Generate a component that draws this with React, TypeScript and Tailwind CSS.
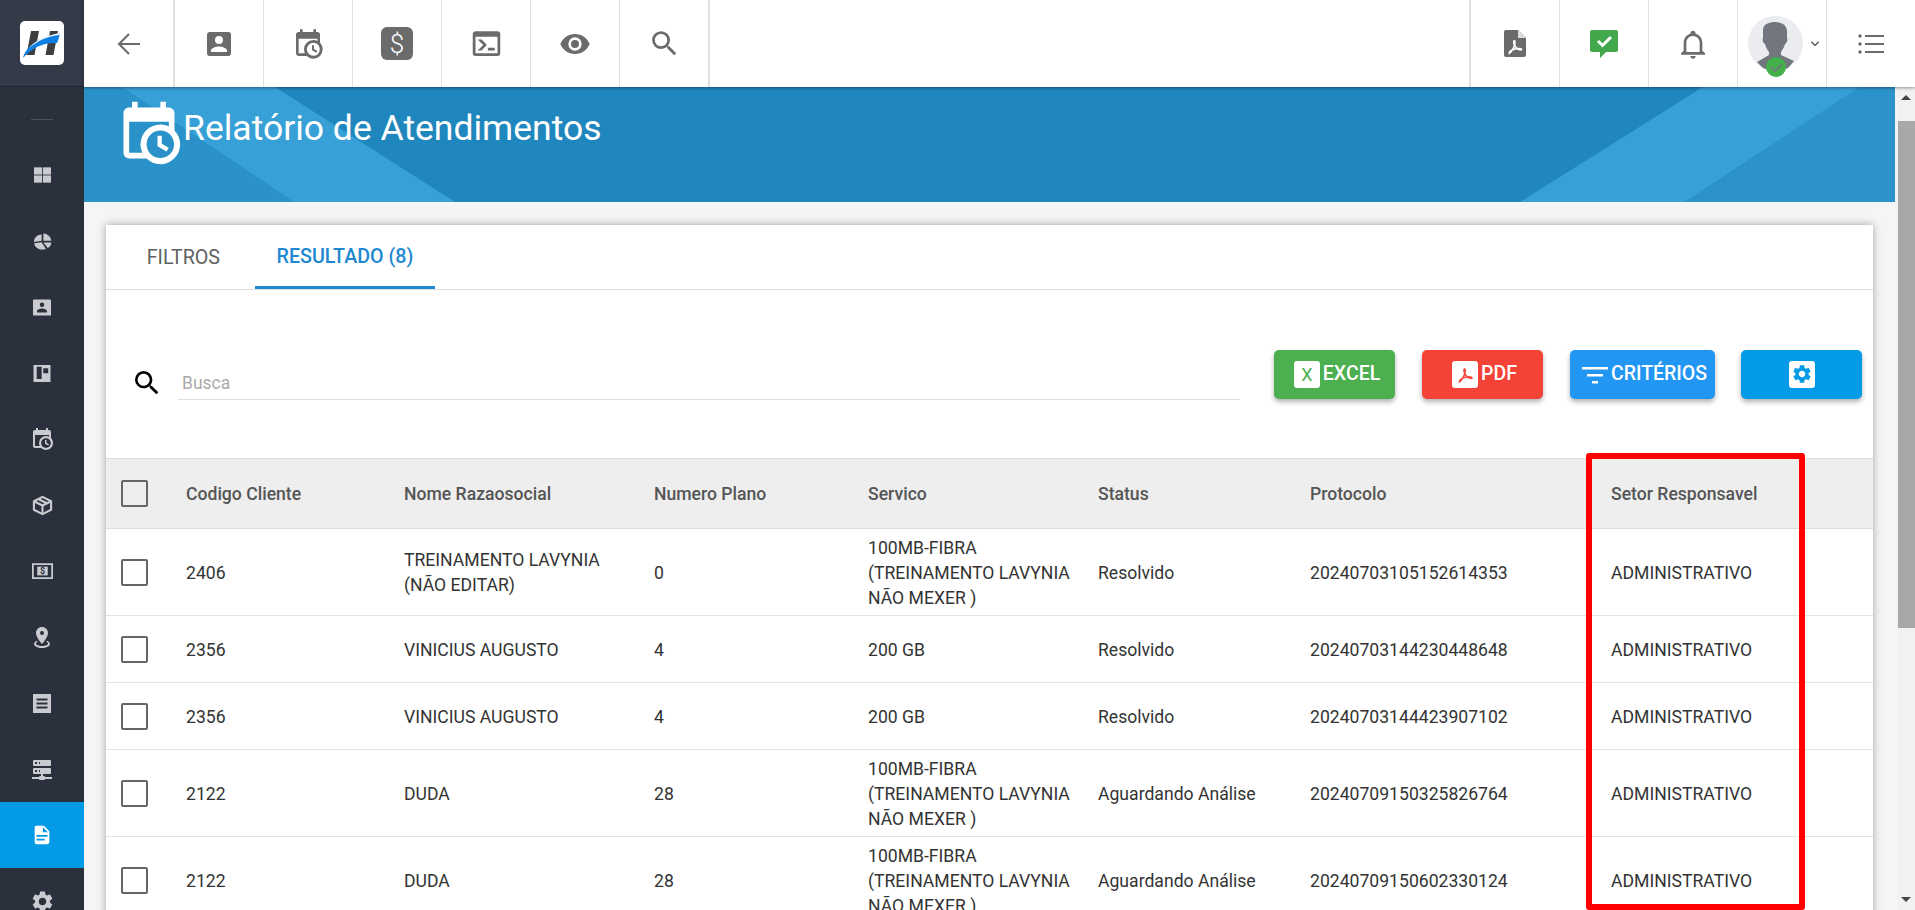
import React from 'react';
import { MdSettings } from 'react-icons/md';

const P = {
  account: 'M6,17C6,15 10,13.9 12,13.9C14,13.9 18,15 18,17V18H6M15,9A3,3 0 0,1 12,12A3,3 0 0,1 9,9A3,3 0 0,1 12,6A3,3 0 0,1 15,9M3,5V19A2,2 0 0,0 5,21H19A2,2 0 0,0 21,19V5A2,2 0 0,0 19,3H5C3.89,3 3,3.9 3,5Z',
  calendarClock: 'M15,13H16.5V15.82L18.94,17.23L18.19,18.53L15,16.69V13M19,8H5V19H9.67C9.24,18.09 9,17.07 9,16A7,7 0 0,1 16,9C17.07,9 18.09,9.24 19,9.67V8M5,21C3.89,21 3,20.1 3,19V5C3,3.89 3.89,3 5,3H6V1H8V3H16V1H18V3H19A2,2 0 0,1 21,5V11.1C22.24,12.36 23,14.09 23,16A7,7 0 0,1 16,23C14.09,23 12.36,22.24 11.1,21H5M16,11.15A4.85,4.85 0 0,0 11.15,16C11.15,18.68 13.32,20.85 16,20.85A4.85,4.85 0 0,0 20.85,16C20.85,13.32 18.68,11.15 16,11.15Z',
  console: 'M20,19V7H4V19H20M20,3A2,2 0 0,1 22,5V19A2,2 0 0,1 20,21H4A2,2 0 0,1 2,19V5C2,3.89 2.9,3 4,3H20M13,17V15H18V17H13M9.58,13L5.57,9H8.4L11.7,12.3C12.09,12.69 12.09,13.33 11.7,13.72L8.42,17H5.59L9.58,13Z',
  eye: 'M12,9A3,3 0 0,0 9,12A3,3 0 0,0 12,15A3,3 0 0,0 15,12A3,3 0 0,0 12,9M12,17A5,5 0 0,1 7,12A5,5 0 0,1 12,7A5,5 0 0,1 17,12A5,5 0 0,1 12,17M12,4.5C7,4.5 2.73,7.61 1,12C2.73,16.39 7,19.5 12,19.5C17,19.5 21.27,16.39 23,12C21.27,7.61 17,4.5 12,4.5Z',
  magnify: 'M9.5,3A6.5,6.5 0 0,1 16,9.5C16,11.11 15.41,12.59 14.44,13.73L14.71,14H15.5L20.5,19L19,20.5L14,15.5V14.71L13.73,14.44C12.59,15.41 11.11,16 9.5,16A6.5,6.5 0 0,1 3,9.5A6.5,6.5 0 0,1 9.5,3M9.5,5C7,5 5,7 5,9.5C5,12 7,14 9.5,14C12,14 14,12 14,9.5C14,7 12,5 9.5,5Z',
  bell: 'M10 21H14C14 22.1 13.1 23 12 23S10 22.1 10 21M21 19V20H3V19L5 17V11C5 7.9 7 5.2 10 4.3V4C10 2.9 10.9 2 12 2S14 2.9 14 4V4.3C17 5.2 19 7.9 19 11V17L21 19M17 11C17 8.2 14.8 6 12 6S7 8.2 7 11V18H17V11Z',
  marker: 'M12,2C15.31,2 18,4.66 18,7.95C18,12.41 12,19 12,19C12,19 6,12.41 6,7.95C6,4.66 8.69,2 12,2M12,6A2,2 0 0,0 10,8A2,2 0 0,0 12,10A2,2 0 0,0 14,8A2,2 0 0,0 12,6M20,19C20,21.21 16.42,23 12,23C7.58,23 4,21.21 4,19C4,17.71 5.22,16.56 7.11,15.83L7.75,16.74C6.67,17.19 6,17.81 6,18.5C6,19.88 8.69,21 12,21C15.31,21 18,19.88 18,18.5C18,17.81 17.33,17.19 16.25,16.74L16.89,15.83C18.78,16.56 20,17.71 20,19Z',
  server: 'M13,19H14A1,1 0 0,1 15,20H22V22H15A1,1 0 0,1 14,23H10A1,1 0 0,1 9,22H2V20H9A1,1 0 0,1 10,19H11V17H4A1,1 0 0,1 3,16V12A1,1 0 0,1 4,11H20A1,1 0 0,1 21,12V16A1,1 0 0,1 20,17H13V19M4,3H20A1,1 0 0,1 21,4V8A1,1 0 0,1 20,9H4A1,1 0 0,1 3,8V4A1,1 0 0,1 4,3M9,7H10V5H9V7M9,15H10V13H9V15M5,5V7H7V5H5M5,13V15H7V13H5Z',
  file: 'M13,9H18.5L13,3.5V9M6,2H14L20,8V20A2,2 0 0,1 18,22H6C4.89,22 4,21.1 4,20V4C4,2.89 4.89,2 6,2M15,18V16H6V18H15M18,14V12H6V14H18Z',
  swoosh: 'M5 20.5c2.5-1.6 4.6-5 6-9 .6-1.8.9-3.6.7-5-.2-1-1.300-1.100-1.500.1-.3 2 1.200 5 3.100 7.100 1.500 1.600 3.500 2.700 5.200 2.800 1.100 0 1.400-1 .300-1.400-2.500-.800-7.300-.100-10.700 1.400-1.700 1-3.200 2.500-3.100 3.500z',
};

const Mdi = ({ d, className }: { d: string; className?: string }) => (
  <svg viewBox="0 0 24 24" className={className} fill="currentColor"><path d={d} /></svg>
);

const TopCell = ({ children, thick, width = 'w-[89px]' }: { children: React.ReactNode; thick?: boolean; width?: string }) => (
  <div className={`flex h-full shrink-0 items-center justify-center border-r border-[#e0e0e0] ${width} ${thick ? 'border-r-2' : ''}`}>
    {children}
  </div>
);

const Logo = () => (
  <svg viewBox="0 0 44 44" className="h-[44px] w-[44px]">
    <rect width="44" height="44" rx="5" fill="#fff" />
    <path d="M11 10h8l-4.500 24h-8z M30 10h8l-4.500 24h-8z" fill="#3f3f42" />
    <path d="M3 37c3-11 13-20 37-25-1 5-2 8-3 10-13-1-24 4-34 15z" fill="#0d7fe0" />
    <path d="M9 27c6-7 15-12 31-15l-.500 2c-12 1-22 6-30.500 13z" fill="#fff" />
  </svg>
);

const SideIcon = ({ children, active }: { children: React.ReactNode; active?: boolean }) => (
  <div className={`flex h-[66px] shrink-0 items-center justify-center ${active ? 'bg-[#039be5] text-white' : 'text-[#c9cbd0]'}`}>
    {children}
  </div>
);

const Sidebar = () => (
  <aside className="flex w-[84px] shrink-0 flex-col overflow-hidden bg-[#2b303d]">
    <div className="flex h-[87px] shrink-0 items-center justify-center border-b border-[#23272f] bg-[#353a48]">
      <Logo />
    </div>
    <div className="mx-auto mt-[32px] mb-[22px] h-px w-[22px] shrink-0 bg-[#4a4f5c]" />
    <SideIcon>
      <svg viewBox="0 0 20 18" className="h-[16px] w-[17px]" fill="currentColor">
        <rect width="9.500" height="8.500" /><rect x="10.500" width="9.500" height="8.500" />
        <rect y="9.500" width="9.500" height="8.500" /><rect x="10.500" y="9.500" width="9.500" height="8.500" />
      </svg>
    </SideIcon>
    <SideIcon>
      <svg viewBox="0 0 24 24" className="h-[21px] w-[21px]" fill="currentColor">
        <path d="M11 4A9 8.500 0 0 0 2 12.500L11 11Z" />
        <path d="M13 3A9 8.500 0 0 1 22 11H13Z" />
        <path d="M2.500 14L11 12.800L16 20.500A9.500 8 0 0 1 2.500 14Z" />
        <path d="M13 13H22A9 8 0 0 1 18 19.500Z" />
      </svg>
    </SideIcon>
    <SideIcon>
      <svg viewBox="0 0 20 18" className="h-[17px] w-[18px]" fill="currentColor">
        <path fillRule="evenodd" d="M1 0H19A1 1 0 0 1 20 1V17A1 1 0 0 1 19 18H1A1 1 0 0 1 0 17V1A1 1 0 0 1 1 0ZM10 3.500A2.500 2.500 0 1 0 10 8.500A2.500 2.500 0 1 0 10 3.500ZM4.500 14.500H15.500V13C15.500 11 12 10 10 10C8 10 4.500 11 4.500 13Z" />
      </svg>
    </SideIcon>
    <SideIcon>
      <svg viewBox="0 0 20 20" className="h-[17px] w-[18px]" fill="currentColor">
        <path fillRule="evenodd" d="M0 0H20V20H0ZM3.800 2V16.500H9.600V2ZM11.500 3.800V9.600H17.300V3.800Z" />
      </svg>
    </SideIcon>
    <SideIcon><Mdi d={P.calendarClock} className="h-[24px] w-[24px]" /></SideIcon>
    <SideIcon>
      <svg viewBox="0 0 22 22" className="h-[21px] w-[21px]" fill="none" stroke="currentColor" strokeWidth="2.200" strokeLinejoin="round">
        <path d="M11 2L20 6.500V15.500L11 20L2 15.500V6.500Z" />
        <path d="M2 6.500L11 11L20 6.500M11 11V20M7 4.500L15.500 8.700" />
      </svg>
    </SideIcon>
    <SideIcon>
      <svg viewBox="0 0 24 18" className="h-[16px] w-[21px]">
        <path fillRule="evenodd" fill="currentColor" d="M0 0H24V18H0ZM2 2V16H22V2Z" />
        <rect x="6" y="4" width="12" height="10" fill="currentColor" />
        <text x="12" y="12.500" textAnchor="middle" fontSize="10" fontWeight="700" fontFamily="Roboto" fill="#2b303d">$</text>
      </svg>
    </SideIcon>
    <SideIcon><Mdi d={P.marker} className="h-[24px] w-[24px]" /></SideIcon>
    <SideIcon>
      <svg viewBox="0 0 18 19" className="h-[19px] w-[18px]" fill="currentColor">
        <path fillRule="evenodd" d="M0 0H18V19H0ZM3.500 4.500V6.500H14.500V4.500ZM3.500 8.500V10.500H14.500V8.500ZM3.500 12.500V14.500H14.500V12.500Z" />
      </svg>
    </SideIcon>
    <SideIcon><Mdi d={P.server} className="h-[24px] w-[24px]" /></SideIcon>
    <SideIcon active><Mdi d={P.file} className="h-[22px] w-[22px]" /></SideIcon>
    <SideIcon><MdSettings className="h-[25px] w-[25px]" /></SideIcon>
  </aside>
);

const TopBar = () => (
  <header className="relative z-20 flex h-[87px] shrink-0 items-stretch justify-between bg-white text-[#6b6b6b] shadow-[0_1px_3px_rgba(0,0,0,0.4)]">
    <div className="flex">
      <TopCell thick width="w-[91px]">
        <svg viewBox="0 0 24 22" className="h-[22px] w-[24px]" fill="none" stroke="currentColor" strokeWidth="2">
          <path d="M23 11H3M12 1L2 11L12 21" />
        </svg>
      </TopCell>
      <TopCell><Mdi d={P.account} className="h-[32px] w-[32px]" /></TopCell>
      <TopCell><Mdi d={P.calendarClock} className="h-[32px] w-[32px]" /></TopCell>
      <TopCell>
        <div className="flex h-[33px] w-[32px] items-center justify-center rounded-[6px] bg-[#6b6b6b] text-[26px] leading-none font-light text-white">$</div>
      </TopCell>
      <TopCell><Mdi d={P.console} className="h-[33px] w-[33px]" /></TopCell>
      <TopCell><Mdi d={P.eye} className="h-[32px] w-[32px]" /></TopCell>
      <TopCell thick width="w-[90px]"><Mdi d={P.magnify} className="h-[33px] w-[33px]" /></TopCell>
    </div>
    <div className="flex">
      <div className="h-full w-[2px] bg-[#e0e0e0]" />
      <TopCell>
        <svg viewBox="0 0 22 27" className="h-[27px] w-[22px]">
          <path d="M2 0H14L22 8V25A2 2 0 0 1 20 27H2A2 2 0 0 1 0 25V2A2 2 0 0 1 2 0Z" fill="#6b6b6b" />
          <path d="M14 0L22 8H14Z" fill="#ddd" />
          <g transform="translate(1 6) scale(0.85)" fill="none" stroke="#fff" strokeWidth="1.800"><path d={P.swoosh} /></g>
        </svg>
      </TopCell>
      <TopCell>
        <svg viewBox="0 0 28 28" className="h-[28px] w-[28px]">
          <path d="M2 0H26A2 2 0 0 1 28 2V20A2 2 0 0 1 26 22H16L10 28V22H2A2 2 0 0 1 0 20V2A2 2 0 0 1 2 0Z" fill="#43a84b" />
          <path d="M8 11L12.500 15.500L21 7" fill="none" stroke="#fff" strokeWidth="3" />
        </svg>
      </TopCell>
      <TopCell><Mdi d={P.bell} className="h-[32px] w-[32px]" /></TopCell>
      <TopCell>
        <div className="relative flex items-center gap-[7px] pl-[4px]">
          <svg viewBox="0 0 55 55" className="h-[55px] w-[55px]">
            <circle cx="27.500" cy="27.500" r="27.500" fill="#ebecef" />
            <path d="M27 6C34 6 38 9 39 14L39 22C40 24 39 27 37 28C36 32 34 34 33 36L33 39L46 45L40 52C32 56 23 56 15 52L9 46L21 39L21 36C19 34 18 31 17 28C15 27 14 24 15 22L15 13C16 8 21 6 27 6Z" fill="#72767f" />
          </svg>
          <span className="absolute top-[41px] left-[22px] flex h-[20px] w-[20px] items-center justify-center rounded-full bg-[#43b04a]">
            <svg viewBox="0 0 20 20" className="h-[20px] w-[20px]"><path d="M5 10L9 14L16 7" fill="none" stroke="#72767f" strokeWidth="1.600" /></svg>
          </span>
          <svg viewBox="0 0 12 8" className="h-[6px] w-[10px]"><path d="M1 1L6 6L11 1" fill="none" stroke="#444" strokeWidth="1.500" /></svg>
        </div>
      </TopCell>
      <div className="flex h-full w-[88px] items-center justify-center">
        <svg viewBox="0 0 26 20" className="h-[20px] w-[26px]" fill="#6b6b6b">
          <circle cx="2" cy="2" r="1.700" /><rect x="7" y="1" width="19" height="2" />
          <circle cx="2" cy="10" r="1.700" /><rect x="7" y="9" width="19" height="2" />
          <circle cx="2" cy="18" r="1.700" /><rect x="7" y="17" width="19" height="2" />
        </svg>
      </div>
    </div>
  </header>
);

const Banner = () => (
  <div className="relative mr-[2px] h-[115px] shrink-0 overflow-hidden bg-[#1f87bd]">
    <svg viewBox="0 0 1811 115" className="absolute inset-0 h-full w-full" preserveAspectRatio="none">
      <path d="M0 0H38L210 115H0Z" fill="#2b92c9" />
      <path d="M38 0H191L371 115H210Z" fill="#37a0d6" />
      <path d="M1619 0H1776L1601 115H1436Z" fill="#37a0d6" />
      <path d="M1776 0H1811V115H1601Z" fill="#2c93ca" />
    </svg>
    <div className="relative flex items-start pt-[12px] pl-[31px]">
      <Mdi d={P.calendarClock} className="h-[68px] w-[68px] text-white" />
      <h1 className="mt-[9px] text-[35.5px] leading-[40px] font-normal text-white">Relatório de Atendimentos</h1>
    </div>
  </div>
);

const ActionButton = ({ children, className }: { children: React.ReactNode; className: string }) => (
  <button className={`flex h-[49px] items-center justify-center gap-[3px] rounded-[5px] text-[19.5px] font-medium text-white shadow-[0_3px_5px_rgba(0,0,0,0.3)] ${className}`}>
    {children}
  </button>
);

const Toolbar = () => (
  <div className="flex h-[168px] items-center pr-[11px] pl-[25px]">
    <Mdi d={P.magnify} className="mt-[18px] h-[32px] w-[32px] shrink-0 text-black" />
    <div className="ml-[15px] flex h-[52px] flex-1 items-end border-b border-[#e0e0e0] pb-[3px] pl-[4px] text-[17.5px] leading-[25px] text-[#aaa]">Busca</div>
    <div className="ml-[34px] flex gap-[27px]">
      <ActionButton className="w-[121px] bg-[#4caf50] pl-[5px]">
        <span className="flex h-[27px] w-[26px] items-center justify-center rounded-[3px] bg-white text-[18px] font-normal text-[#4caf50]">X</span>
        EXCEL
      </ActionButton>
      <ActionButton className="w-[121px] bg-[#f44336] pl-[4px]">
        <span className="flex h-[27px] w-[26px] items-center justify-center rounded-[3px] bg-white">
          <svg viewBox="0 0 24 24" className="h-[21px] w-[21px]" fill="none" stroke="#f44336" strokeWidth="1.600"><path d={P.swoosh} /></svg>
        </span>
        PDF
      </ActionButton>
      <ActionButton className="w-[145px] bg-[#2196f3] pl-[4px]">
        <svg viewBox="0 0 26 20" className="h-[20px] w-[26px]" fill="#fff"><rect y="3" width="26" height="2.500" /><rect x="5" y="10" width="16" height="2.500" /><rect x="10" y="17" width="6" height="2.500" /></svg>
        CRITÉRIOS
      </ActionButton>
      <ActionButton className="-ml-[1px] w-[121px] bg-[#039be5]">
        <span className="flex h-[27px] w-[26px] items-center justify-center rounded-[3px] bg-white">
          <MdSettings className="h-[22px] w-[22px] text-[#039be5]" />
        </span>
      </ActionButton>
    </div>
  </div>
);

const rows = [
  { h: 'h-[87px]', codigo: '2406', nome: 'TREINAMENTO LAVYNIA (NÃO EDITAR)', plano: '0', servico: '100MB-FIBRA (TREINAMENTO LAVYNIA NÃO MEXER )', status: 'Resolvido', protocolo: '20240703105152614353' },
  { h: 'h-[67px]', codigo: '2356', nome: 'VINICIUS AUGUSTO', plano: '4', servico: '200 GB', status: 'Resolvido', protocolo: '20240703144230448648' },
  { h: 'h-[67px]', codigo: '2356', nome: 'VINICIUS AUGUSTO', plano: '4', servico: '200 GB', status: 'Resolvido', protocolo: '20240703144423907102' },
  { h: 'h-[87px]', codigo: '2122', nome: 'DUDA', plano: '28', servico: '100MB-FIBRA (TREINAMENTO LAVYNIA NÃO MEXER )', status: 'Aguardando Análise', protocolo: '20240709150325826764' },
  { h: 'h-[87px]', codigo: '2122', nome: 'DUDA', plano: '28', servico: '100MB-FIBRA (TREINAMENTO LAVYNIA NÃO MEXER )', status: 'Aguardando Análise', protocolo: '20240709150602330124' },
];

const Check = () => <div className="ml-[15px] h-[27px] w-[27px] rounded-[2px] border-2 border-[#666]" />;

const ResultTable = () => (
  <table className="w-full table-fixed text-left text-[17.6px] leading-[25px] text-[#333]">
    <colgroup>
      <col className="w-[80px]" /><col className="w-[218px]" /><col className="w-[250px]" /><col className="w-[214px]" />
      <col className="w-[230px]" /><col className="w-[212px]" /><col className="w-[301px]" /><col />
    </colgroup>
    <thead>
      <tr className="h-[70px] border-y border-[#ddd] bg-[#eeeeee] text-[#555]">
        <th><Check /></th>
        {['Codigo Cliente', 'Nome Razaosocial', 'Numero Plano', 'Servico', 'Status', 'Protocolo', 'Setor Responsavel'].map((c) => (
          <th key={c} className="pt-[2px] font-medium">{c}</th>
        ))}
      </tr>
    </thead>
    <tbody>
      {rows.map((r) => (
        <tr key={r.protocolo} className={`border-b border-[#e2e2e2] ${r.h}`}>
          <td><Check /></td>
          <td className="pt-[2px]">{r.codigo}</td>
          <td className="pt-[2px] pr-[30px]">{r.nome}</td>
          <td className="pt-[2px]">{r.plano}</td>
          <td className="pt-[2px] pr-[20px]">{r.servico}</td>
          <td className="pt-[2px]">{r.status}</td>
          <td className="pt-[2px]">{r.protocolo}</td>
          <td className="pt-[2px]">ADMINISTRATIVO</td>
        </tr>
      ))}
    </tbody>
  </table>
);

const Card = () => (
  <section className="mt-[23px] mr-[24px] ml-[22px] bg-white shadow-[0_0_8px_rgba(0,0,0,0.35)]">
    <div className="flex h-[65px] border-b border-[#ddd] text-[19.7px]">
      <div className="flex w-[114px] items-center justify-end pt-[2px] text-[#616161]">FILTROS</div>
      <div className="ml-[35px] flex w-[180px] items-center justify-center border-b-[3px] border-[#1e88d2] pt-[2px] font-medium text-[#1e88d2]">RESULTADO (8)</div>
    </div>
    <Toolbar />
    <ResultTable />
  </section>
);

const Scrollbar = () => (
  <div className="flex w-[18px] shrink-0 flex-col items-center bg-[#f1f1f1]">
    <div className="mt-[8px] h-0 w-0 border-x-[5px] border-b-[5px] border-x-transparent border-b-[#444]" />
    <div className="mt-[21px] h-[507px] w-[17px] bg-[#a8a8a8]" />
    <div className="mt-auto mb-[8px] h-0 w-0 border-x-[5px] border-t-[5px] border-x-transparent border-t-[#444]" />
  </div>
);

const App: React.FC = () => (
  <div className="relative flex h-[910px] w-[1915px] overflow-hidden bg-white font-[Roboto,sans-serif]">
    <Sidebar />
    <div className="flex min-w-0 flex-1 flex-col">
      <TopBar />
      <div className="flex min-h-0 flex-1">
        <main className="min-w-0 flex-1 overflow-hidden bg-[#f5f5f5]">
          <Banner />
          <Card />
        </main>
        <Scrollbar />
      </div>
    </div>
    {/* red highlight drawn over the table */}
    <div className="absolute top-[453px] left-[1586px] h-[457px] w-[219px] rounded-[3px] border-[6px] border-[#ff0000]" />
  </div>
);

export default App;
